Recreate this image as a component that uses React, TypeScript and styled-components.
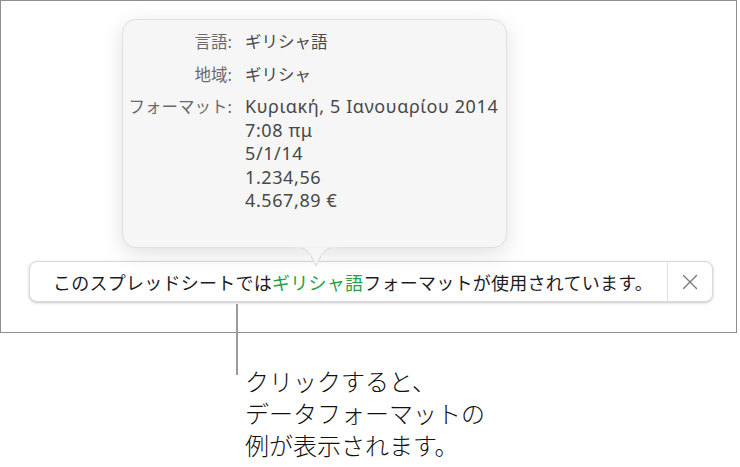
import React from "react";
import styled, { createGlobalStyle } from "styled-components";

const GlobalStyle = createGlobalStyle`
  body {
    margin: 0;
    background: #ffffff;
    font-family: "Noto Sans", "Noto Sans CJK JP", sans-serif;
  }
`

const Page = styled.div`
  width: 740px;
  height: 467px;
  overflow: hidden;
`

const Frame = styled.div`
  position: relative;
  width: 735px;
  height: 331px;
  border: 1px solid #8e8e8e;
  display: flex;
  flex-direction: column;
`

const Popover = styled.div`
  position: relative;
  margin: 18px 0 0 121px;
  width: 385px;
  height: 229px;
  box-sizing: border-box;
  padding-top: 10px;
  background: #f6f6f6;
  border: 1px solid #e0e0e0;
  border-radius: 14px;
  box-shadow: 0 6px 22px rgba(0, 0, 0, 0.12);
`

const Arrow = styled.svg`
  position: absolute;
  left: 172px;
  bottom: -21px;
`

const Details = styled.div`
  display: grid;
  grid-template-columns: 109px 1fr;
  column-gap: 13px;
  row-gap: 9px;
  font-size: 16.5px;
  line-height: 23.5px;
`

const Term = styled.div`
  text-align: right;
  color: #6a6a6a;
  white-space: nowrap;
`

const Value = styled.div`
  color: #484848;
  white-space: nowrap;
`

const Line = styled.div<{ $latin?: boolean }>`
  font-size: ${(p) => (p.$latin ? "18px" : "16.5px")};
  letter-spacing: ${(p) => (p.$latin ? "0.6px" : "0")};
`

const Banner = styled.div`
  margin: 13px 0 0 28px;
  width: 684px;
  height: 41px;
  box-sizing: border-box;
  display: flex;
  align-items: stretch;
  background: #ffffff;
  border: 1px solid #dadada;
  border-radius: 8px;
  box-shadow: 0 1px 3px rgba(0, 0, 0, 0.22);
`

const Message = styled.div`
  flex: 1;
  display: flex;
  align-items: center;
  padding-left: 23px;
  font-family: "Noto Sans CJK JP", sans-serif;
  font-size: 18px;
  letter-spacing: 0.25px;
  color: #1d1d1f;
  white-space: nowrap;
`

const Highlight = styled.span`
  color: #26a148;
`

const Close = styled.div`
  width: 44px;
  border-left: 1px solid #e2e2e2;
  display: flex;
  align-items: center;
  justify-content: center;
`

const Callout = styled.div`
  position: relative;
  margin: 32px 0 0 236px;
`

const Leader = styled.div`
  position: absolute;
  left: 0;
  top: -61px;
  width: 2px;
  height: 71px;
  background: #9a9a9a;
`

const CalloutText = styled.div`
  padding-left: 9px;
  font-family: "Noto Sans CJK JP", sans-serif;
  font-weight: 300;
  font-size: 24px;
  line-height: 32px;
  color: #111111;
`

const details: [string, string[], boolean][] = [
  ["言語:", ["ギリシャ語"], false],
  ["地域:", ["ギリシャ"], false],
  ["フォーマット:", ["Κυριακή, 5 Ιανουαρίου 2014", "7:08 πμ", "5/1/14", "1.234,56", "4.567,89 €"], true],
]

export default function App() {
  return (
    <Page>
      <GlobalStyle />
      <Frame>
        <Popover>
          <Details>
            {details.map(([term, values, latin]) => (
              <React.Fragment key={term}>
                <Term>{term}</Term>
                <Value>
                  {values.map((v) => (
                    <Line key={v} $latin={latin}>{v}</Line>
                  ))}
                </Value>
              </React.Fragment>
            ))}
          </Details>
          <Arrow width="42" height="22" viewBox="0 0 42 22">
            <path d="M0 1 C10 1 14 5 17 12 L21 20 L25 12 C28 5 32 1 42 1 Z" fill="#f6f6f6" stroke="#dadada" strokeWidth="1" />
            <rect x="0" y="0" width="42" height="1.5" fill="#f6f6f6" />
          </Arrow>
        </Popover>
        <Banner>
          <Message>
            このスプレッドシートでは<Highlight>ギリシャ語</Highlight>フォーマットが使用されています。
          </Message>
          <Close>
            <svg width="16" height="16" viewBox="0 0 16 16">
              <path d="M1.5 1.5 L14.5 14.5 M14.5 1.5 L1.5 14.5" stroke="#7a7a7a" strokeWidth="1.4" strokeLinecap="round" />
            </svg>
          </Close>
        </Banner>
      </Frame>
      <Callout>
        <Leader />
        <CalloutText>
          <div>クリックすると、</div>
          <div>データフォーマットの</div>
          <div>例が表示されます。</div>
        </CalloutText>
      </Callout>
    </Page>
  );
}
